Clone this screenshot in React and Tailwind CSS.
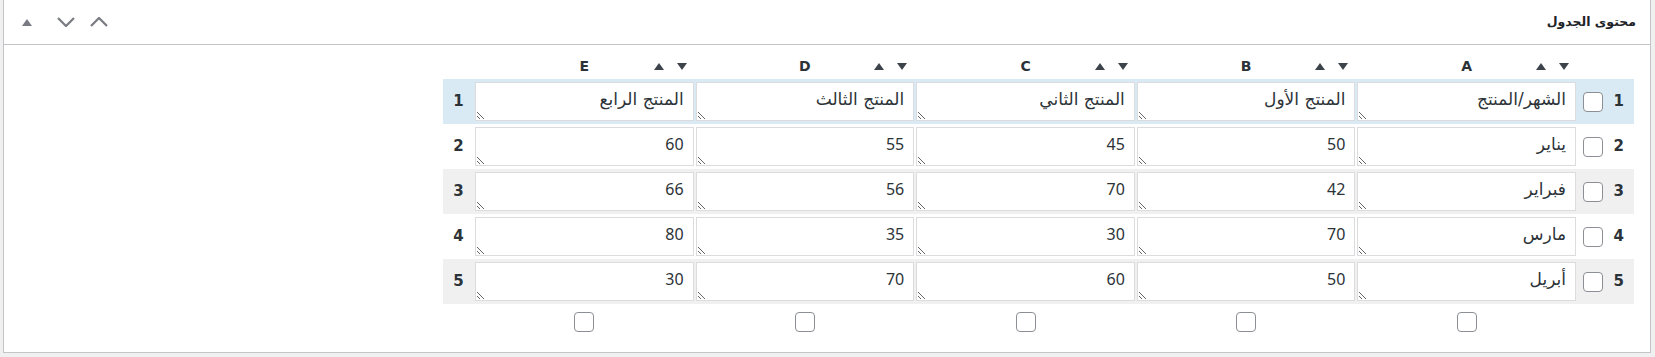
import React from "react";

const rows = [
  ["الشهر/المنتج", "المنتج الأول", "المنتج الثاني", "المنتج الثالث", "المنتج الرابع"],
  ["يناير", "50", "45", "55", "60"],
  ["فبراير", "42", "70", "56", "66"],
  ["مارس", "70", "30", "35", "80"],
  ["أبريل", "50", "60", "70", "30"],
];
const cols = ["A", "B", "C", "D", "E"];
const rowBg = ["bg-[#d9eaf4]", "bg-white", "bg-[#f0f0f1]", "bg-white", "bg-[#f0f0f1]"];

const font = { fontFamily: '"DejaVu Sans", "Noto Sans", sans-serif' };
const isArabic = (s) => /[\u0600-\u06FF]/.test(s);

function Up() {
  return (
    <svg width="10" height="7" viewBox="0 0 10 7" className="block">
      <polygon points="5,0 10,7 0,7" fill="#3c434a" />
    </svg>
  );
}
function Down() {
  return (
    <svg width="10" height="7" viewBox="0 0 10 7" className="block">
      <polygon points="0,0 10,0 5,7" fill="#3c434a" />
    </svg>
  );
}

function Check() {
  return (
    <input
      type="checkbox"
      readOnly
      className="appearance-none block w-[20px] h-[20px] border border-[#8c8f94] rounded-[4px] bg-white m-0"
    />
  );
}

export default function App() {
  return (
    <div className="w-[1655px] h-[357px] bg-[#f0f0f1] overflow-hidden text-[#2c3338]" style={font}>
      <div className="ml-[3px] w-[1648px] h-[353px] border border-t-0 border-[#c3c4c7] bg-white">
        {/* header */}
        <div className="h-[45px] border-b border-[#c3c4c7] flex items-center justify-between">
          <div className="flex items-center pl-[18px]">
            <svg width="10" height="7" viewBox="0 0 10 7" className="block">
              <polygon points="5,0 10,7 0,7" fill="#787c82" />
            </svg>
            <svg width="18" height="10" viewBox="0 0 18 10" className="block ml-[25px]">
              <polyline points="1,1 9,9 17,1" fill="none" stroke="#787c82" strokeWidth="2.2" />
            </svg>
            <svg width="18" height="10" viewBox="0 0 18 10" className="block ml-[15px]">
              <polyline points="1,9 9,1 17,9" fill="none" stroke="#787c82" strokeWidth="2.2" />
            </svg>
          </div>
          <div dir="rtl" className="pr-[14px] text-[12.5px] font-bold text-[#1d2327]">
            محتوى الجدول
          </div>
        </div>

        {/* table */}
        <div dir="rtl" className="pr-[16px]">
          <div className="w-[1191px]">
            {/* column header */}
            <div className="grid grid-cols-[57px_repeat(5,1fr)_31px] h-[34px] pt-[8px]">
              <div />
              {cols.map((c) => (
                <div key={c} className="grid grid-cols-[1fr_auto_1fr] items-center px-[1px]">
                  <div className="flex items-center gap-[13px] pr-[7px]">
                    <Down />
                    <Up />
                  </div>
                  <div className="text-[14px] font-bold text-[#2c3338]">{c}</div>
                  <div />
                </div>
              ))}
              <div />
            </div>

            {/* rows */}
            {rows.map((r, i) => (
              <div
                key={i}
                className={`grid grid-cols-[57px_repeat(5,1fr)_31px] h-[45px] items-center ${rowBg[i]}`}
              >
                <div className="flex items-center pr-[10px] gap-[12px]">
                  <span className="text-[15px] font-bold w-[9px] text-center text-[#2c3338]">{i + 1}</span>
                  <Check />
                </div>
                {r.map((v, j) =>
                  isArabic(v) ? (
                    <div key={j} className="px-[1px]">
                      <textarea
                        dir="rtl"
                        rows={1}
                        readOnly
                        defaultValue={v}
                        className="block w-full h-[39px] border border-[#dcdcde] bg-white px-[9px] pt-[5px] text-[17px] leading-[22px] text-[#2c3338] overflow-hidden outline-none"
                        style={{ fontFamily: '"DejaVu Sans", sans-serif', resize: "both" }}
                      />
                    </div>
                  ) : (
                    <div key={j} className="px-[1px]">
                      <textarea
                        dir="rtl"
                        rows={1}
                        readOnly
                        defaultValue={v}
                        className="block w-full h-[39px] border border-[#dcdcde] bg-white px-[9px] pt-[5px] text-[16px] leading-[22px] text-[#2c3338] overflow-hidden outline-none"
                        style={{ fontFamily: '"Noto Sans", "DejaVu Sans", sans-serif', resize: "both" }}
                      />
                    </div>
                  )
                )}
                <div className="text-center text-[15px] font-bold text-[#2c3338]">{i + 1}</div>
              </div>
            ))}

            {/* footer checkboxes */}
            <div className="grid grid-cols-[57px_repeat(5,1fr)_31px] pt-[8px]">
              <div />
              {cols.map((c) => (
                <div key={c} className="flex justify-center">
                  <Check />
                </div>
              ))}
              <div />
            </div>
          </div>
        </div>
      </div>
    </div>
  );
}
